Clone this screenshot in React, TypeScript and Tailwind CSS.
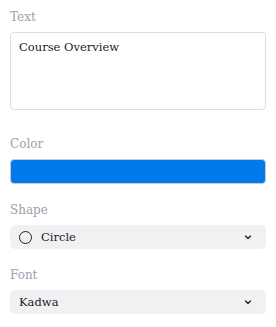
import React, { useState } from 'react';

const labelCls = "block text-[12px] leading-[16px] text-[#9ba1ac] mb-[7px]";

const Chevron: React.FC = () => (
  <svg width="10" height="10" viewBox="0 0 10 10" fill="none" stroke="#222" strokeWidth={1.3} strokeLinecap="round" strokeLinejoin="round">
    <path d="M2.5 4l2.5 2.5L7.5 4" />
  </svg>
);

const App: React.FC = () => {
  const [text, setText] = useState('Course Overview');

  return (
    <div className="w-[276px] h-[327px] bg-white px-[10px] pt-[9px] text-[#1f2023]" style={{ fontFamily: '"DejaVu Serif", serif' }}>
      {/* Text */}
      <div>
        <label className={labelCls}>Text</label>
        <textarea
          value={text}
          onChange={(e) => setText(e.target.value)}
          className="block w-full h-[78px] resize-none border border-[#dcdde1] rounded-[4px] px-[8px] py-[6px] text-[11.5px] leading-[16px] text-[#1f2023] outline-none"
        />
      </div>

      {/* Color */}
      <div className="mt-[26px]">
        <label className={labelCls}>Color</label>
        <div className="h-[25px] w-full rounded-[4px] border border-[#c9ccd3] bg-[#0079ea]" />
      </div>

      {/* Shape */}
      <div className="mt-[18px]">
        <label className={labelCls}>Shape</label>
        <div className="h-[24px] w-full rounded-[5px] bg-[#f0f1f3] flex items-center pl-[9px] pr-[13px]">
          <span className="w-[13px] h-[13px] rounded-full border-[1.5px] border-[#1f2023]" />
          <span className="ml-[9px] text-[11.5px] leading-[16px]">Circle</span>
          <span className="ml-auto flex"><Chevron /></span>
        </div>
      </div>

      {/* Font */}
      <div className="mt-[18px]">
        <label className={labelCls}>Font</label>
        <div className="h-[24px] w-full rounded-[5px] bg-[#f0f1f3] flex items-center pl-[9px] pr-[13px]">
          <span className="text-[11.5px] leading-[16px]">Kadwa</span>
          <span className="ml-auto flex"><Chevron /></span>
        </div>
      </div>
    </div>
  );
};

export default App;
